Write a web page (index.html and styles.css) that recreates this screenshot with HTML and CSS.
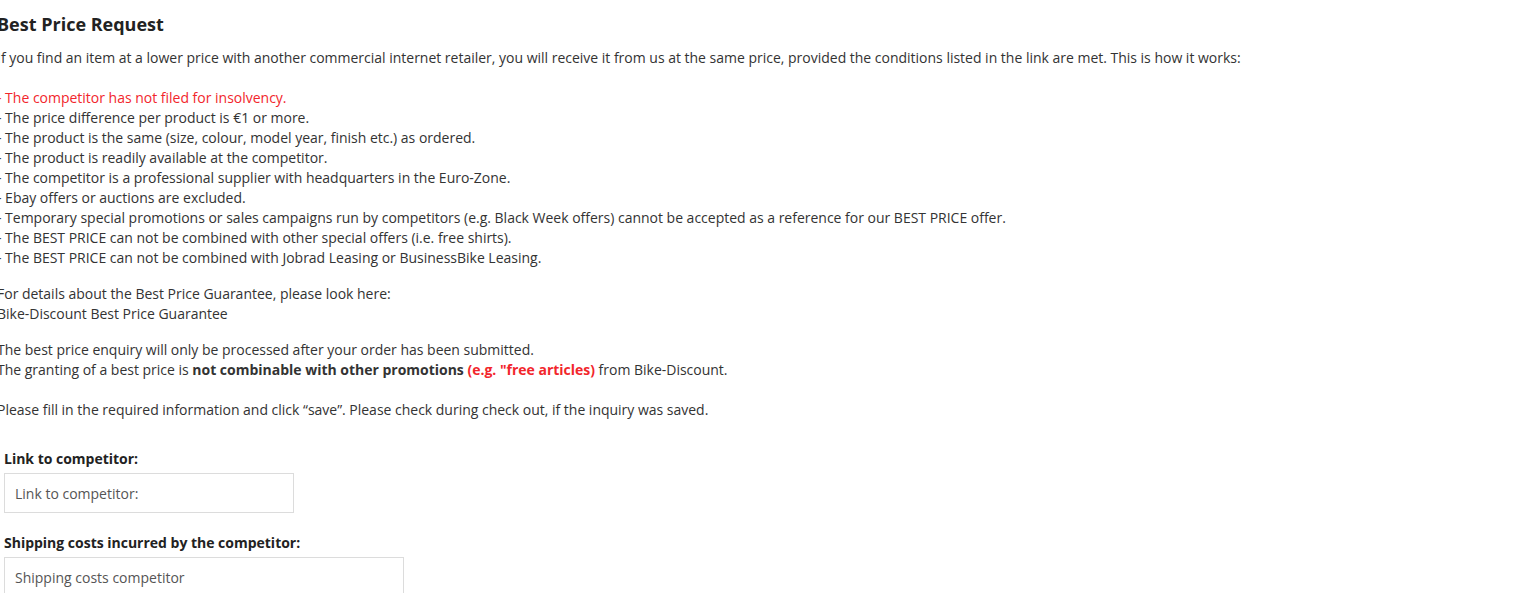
FILE: index.html
```html
<!DOCTYPE html>
<html lang="en">
<head>
<meta charset="utf-8">
<title>Best Price Request</title>
<link rel="stylesheet" href="styles.css">
</head>
<body>
<div class="wrap">
  <h1 class="title">Best Price Request</h1>
  <p class="intro">If you find an item at a lower price with another commercial internet retailer, you will receive it from us at the same price, provided the conditions listed in the link are met. This is how it works:</p>
  <ul class="conditions">
    <li class="warn">- The competitor has not filed for insolvency.</li>
    <li>- The price difference per product is €1 or more.</li>
    <li>- The product is the same (size, colour, model year, finish etc.) as ordered.</li>
    <li>- The product is readily available at the competitor.</li>
    <li>- The competitor is a professional supplier with headquarters in the Euro-Zone.</li>
    <li>- Ebay offers or auctions are excluded.</li>
    <li>- Temporary special promotions or sales campaigns run by competitors (e.g. Black Week offers) cannot be accepted as a reference for our BEST PRICE offer.</li>
    <li>- The BEST PRICE can not be combined with other special offers (i.e. free shirts).</li>
    <li>- The BEST PRICE can not be combined with Jobrad Leasing or BusinessBike Leasing.</li>
  </ul>
  <p class="block">For details about the Best Price Guarantee, please look here:<br><a class="plain-link" href="#">Bike-Discount Best Price Guarantee</a></p>
  <p class="block">The best price enquiry will only be processed after your order has been submitted.<br>The granting of a best price is <strong>not combinable with other promotions</strong> <strong class="red">(e.g. "free articles)</strong> from Bike-Discount.</p>
  <p class="block note">Please fill in the required information and click “save”. Please check during check out, if the inquiry was saved.</p>
  <form class="form">
    <div class="field">
      <label class="label" for="link">Link to competitor:</label>
      <input class="input input-short" id="link" type="text" placeholder="Link to competitor:">
    </div>
    <div class="field">
      <label class="label" for="ship">Shipping costs incurred by the competitor:</label>
      <input class="input input-long" id="ship" type="text" placeholder="Shipping costs competitor">
    </div>
  </form>
</div>
</body>
</html>
```

FILE: styles.css
```css
html, body {
  margin: 0;
  padding: 0;
  background: #fff;
}
body {
  font-family: "Open Sans", "Liberation Sans", sans-serif;
  font-size: 14px;
  line-height: 20px;
  color: #333;
  overflow: hidden;
  letter-spacing: -0.01px;
}
.wrap {
  margin-left: -3px;
}
.title {
  margin: 11px 0 11px;
  font-size: 18px;
  line-height: 26px;
  font-weight: 700;
  color: #222;
  letter-spacing: 0;
}
.intro {
  margin: 0 0 20px;
}
.conditions {
  list-style: none;
  margin: 0;
  padding: 0;
}
.warn {
  color: #f2262c;
}
.block {
  margin: 16px 0 0;
}
.note {
  margin-top: 20px;
}
.plain-link {
  color: #333;
  text-decoration: none;
}
strong {
  font-weight: 700;
}
.red {
  color: #f2262c;
}
.form {
  padding-left: 7px;
  margin-top: 29px;
}
.field {
  display: flex;
  flex-direction: column;
  align-items: flex-start;
  margin-bottom: 20px;
}
.label {
  font-weight: 700;
  color: #222;
  margin-bottom: 4px;
}
.input {
  box-sizing: border-box;
  height: 40px;
  border: 1px solid #dcdcdc;
  border-radius: 0;
  padding: 0 10px;
  font-family: "Open Sans", "Liberation Sans", sans-serif;
  font-size: 14px;
  color: #333;
  background: #fff;
  outline: none;
}
.input::placeholder {
  color: #555;
  opacity: 1;
}
.input-short {
  width: 290px;
}
.input-long {
  width: 400px;
}
```
